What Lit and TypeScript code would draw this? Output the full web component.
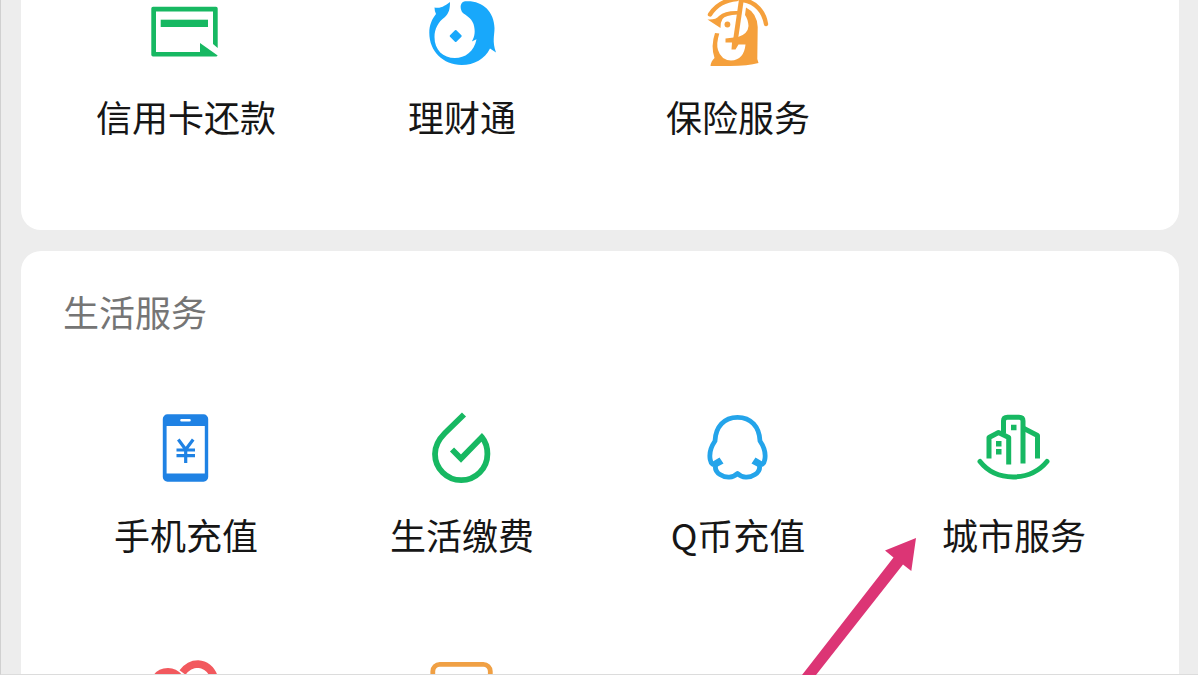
import { LitElement, html, css, svg, SVGTemplateResult } from "lit";
import { customElement } from "lit/decorators.js";

interface Service {
  label?: string;
  viewBox: string;
  art: SVGTemplateResult;
}

const GREEN = "#17b862";
const ORANGE = "#f5a03c";

const finance: Service[] = [
  {
    label: "信用卡还款",
    viewBox: "150 0 72 72",
    art: svg`
      <path fill=${GREEN} fill-rule="evenodd" d="M153 6.700H216a1.700 1.700 0 0 1 1.700 1.700V48L213 44V11.500H156V52H200V43L217.700 55.500L216.500 56.500H153a1.700 1.700 0 0 1-1.700-1.700V8.400a1.700 1.700 0 0 1 1.700-1.700Z"/>
      <rect fill=${GREEN} x="160.700" y="19.700" width="47.300" height="7.300"/>`,
  },
  {
    label: "理财通",
    viewBox: "426 0 72 72",
    art: svg`
      <path fill="#18a8fb" d="M434.500 7.500C441 9 446 5 450 2C450 9 449 13 445 17C438 22 434.500 29 434.500 37C434.500 50 443 58 455 58C465 58 474 52 476.500 39.300L471.800 41.500C475 36 475.500 31 473.500 24C471 17 466 16 462 12C459.500 7 460.500 2 465 1.300C482 0 494 11 494.500 28C494.500 36 492 41 496 52.500L490 48.500C485 59 474 65 461.700 65C443 65 429.300 51 429.300 33C429.300 25 432 19 436 14Q434.500 11 434.500 7.500Z"/>
      <path fill="#18a8fb" stroke="#18a8fb" stroke-width="2" stroke-linejoin="round" d="M455.700 31l5 5-5 5-5-5Z"/>`,
  },
  {
    label: "保险服务",
    viewBox: "702 0 72 72",
    art: svg`
      <g fill="none" stroke=${ORANGE} stroke-width="4.400" stroke-linecap="round">
        <path d="M710 14.500C716 5 725 0 737 -1"/>
        <path d="M743 0C756 2 764 12 766 24"/>
        <path stroke-linecap="butt" stroke-width="4.800" d="M741.500 -1L735.500 40"/>
      </g>
      <g fill=${ORANGE}>
        <path d="M707.500 19.500Q716 20 719 16Q725 10.500 738 11V14.500Q725 15 722.500 19Q720 23 720.500 28Z"/>
        <circle cx="727.400" cy="24.500" r="2.900"/>
        <path d="M746 7.500Q757 13 757.700 27L757.300 59L758.500 63Q748 66 730 66H710.500Q711 61 714.500 58Q710.500 46 715 33L719.300 33.500Q716 44 718 50Q721 60 731 60.500Q744 60 745.500 44.500H738.500L735.500 49.500H731.500L732 42.500H725.500V38.500L738 37Q748 34 748.500 26Q748 19 745 15Z"/>
      </g>`,
  },
];

const life: Service[] = [
  {
    label: "手机充值",
    viewBox: "150 412 72 72",
    art: svg`
      <path fill="#1f82e4" fill-rule="evenodd" d="M167.500 414.300H203.500a4.700 4.700 0 0 1 4.700 4.700V477a4.700 4.700 0 0 1-4.700 4.700H167.500a4.700 4.700 0 0 1-4.700-4.700V419a4.700 4.700 0 0 1 4.700-4.700ZM166.600 426V473.500H204.800V426ZM181.500 419a1.200 1.200 0 0 0 0 2.600H189.500a1.200 1.200 0 0 0 0-2.600Z"/>
      <path fill="none" stroke="#1f82e4" stroke-width="3.200" d="M178.300 439.500L185.700 449.500L193.200 439.500M176.500 450H195M176.500 455.700H195M185.700 449V463"/>`,
  },
  {
    label: "生活缴费",
    viewBox: "426 412 72 72",
    art: svg`
      <path fill="none" stroke=${GREEN} stroke-width="5.800" d="M464 414.500L445 433C438.500 439.500 435 446 435 454A26.200 26.200 0 0 0 487.400 454C487.400 447 485 441 481.800 437.200L461 458.500L452 449.500"/>`,
  },
  {
    label: "Q币充值",
    viewBox: "702 412 72 72",
    art: svg`
      <path fill="none" stroke="#24a4ea" stroke-width="4.800" stroke-linejoin="round" d="M737.500 417.300C724 417.300 715.500 427 715 441C710.500 447.500 709 453 710.200 459.500C711 464 713.500 466 716 463.500C714.500 468 716 472 720 474.500C726 478.500 733 478 737.500 473.500C742 478 749 478.500 755 474.500C759 472 760.500 468 759 463.500C761.500 466 764 464 764.800 459.500C766 453 764.500 447.500 760 441C759.500 427 751 417.300 737.500 417.300Z"/>
      <path fill="#24a4ea" d="M719.500 457.500L723.500 463.500L716 467.500L712 462ZM755.500 457.500L751.500 463.500L759 467.500L763 462Z"/>`,
  },
  {
    label: "城市服务",
    viewBox: "978 412 72 72",
    art: svg`
      <g fill="none" stroke=${GREEN} stroke-width="5" stroke-linejoin="round">
        <path stroke-linecap="round" d="M980 461.500C996 482 1030 482 1047 461.500"/>
        <path d="M989 458.500V437.500L998.500 432.500L1008.700 437.500V464.500"/>
        <path d="M1003.500 433.500V421Q1003.500 417.200 1007.500 417.200H1019Q1023 417.200 1023 421V463.500"/>
        <path d="M1024 428.500L1037.500 435.500V458.500"/>
      </g>
      <path fill=${GREEN} d="M996 441h5.500v5.500h-5.500zM996 449h5.500v5.500h-5.500zM1011 424.700h5.500v5.500h-5.500z"/>`,
  },
  {
    viewBox: "150 660 72 72",
    art: svg`
      <path fill="#f2595e" d="M149 690Q151 668 168 668Q177 668 183 676L190 700Z"/>
      <path fill="none" stroke="#f2595e" stroke-width="7.500" d="M182.500 672.500Q189 664 198 664Q210 665 214.500 678Q218 692 205 704"/>`,
  },
  {
    viewBox: "426 660 72 72",
    art: svg`
      <rect fill="none" stroke="#f0a044" stroke-width="4.800" x="432.800" y="664.300" width="57.500" height="60" rx="7"/>
      <circle fill="#f0a044" cx="461.500" cy="678" r="4"/>`,
  },
];

@customElement("service-tile")
export class ServiceTile extends LitElement {
  static properties = { service: { attribute: false } };
  declare service: Service;

  static styles = css`
    :host {
      display: block;
    }
    .tile {
      display: flex;
      flex-direction: column;
      align-items: center;
      gap: var(--tile-gap, 26px);
      color: #161616;
      text-decoration: none;
      font-size: 36px;
      line-height: 48px;
      white-space: nowrap;
    }
    .icon {
      display: block;
      width: 72px;
      height: 72px;
      overflow: visible;
    }
  `;

  render() {
    const { label, viewBox, art } = this.service;
    return html`<a class="tile" href="#">
      <svg class="icon" viewBox=${viewBox} aria-hidden="true">${art}</svg>
      ${label ? html`<span>${label}</span>` : null}
    </a>`;
  }
}

@customElement("app-root")
export class AppRoot extends LitElement {
  static styles = css`
    :host {
      display: block;
      position: relative;
      box-sizing: border-box;
      height: 100vh;
      overflow: hidden;
      background: #ededed;
      font-family: "Noto Sans CJK SC", sans-serif;
    }
    .frame {
      position: absolute;
      inset: 0;
      border-left: 1px solid #d0d0d0;
      border-bottom: 1px solid #dcdcdc;
      pointer-events: none;
    }
    .page {
      display: flex;
      flex-direction: column;
      gap: 21px;
      padding: 0 19px 0 21px;
    }
    .card {
      background: #fff;
      border-radius: 20px;
      padding: 36px 27px 90px;
    }
    .first {
      --tile-gap: 20px;
      padding-top: 0;
      border-radius: 0 0 20px 20px;
    }
    .title {
      margin: 0 15px 77px;
      font-size: 36px;
      line-height: 48px;
      font-weight: 400;
      color: #757575;
    }
    .grid {
      display: grid;
      grid-template-columns: repeat(4, 1fr);
      row-gap: 102px;
    }
    .arrow {
      position: absolute;
      top: 538px;
      right: 282px;
      width: 116px;
      height: 137px;
      pointer-events: none;
    }
  `;

  private tiles(list: Service[]) {
    return html`<div class="grid">
      ${list.map((s) => html`<service-tile .service=${s}></service-tile>`)}
    </div>`;
  }

  render() {
    return html`
      <main class="page">
        <section class="card first">${this.tiles(finance)}</section>
        <section class="card">
          <h2 class="title">生活服务</h2>
          ${this.tiles(life)}
        </section>
      </main>
      <div class="frame"></div>
      <svg class="arrow" viewBox="800 538 116 137" aria-hidden="true">
        <path fill="#dc3575" d="M916 538L911.300 571L903 564.500L816 675H802L893.500 557.500L885 550.500Z"/>
      </svg>
    `;
  }
}
